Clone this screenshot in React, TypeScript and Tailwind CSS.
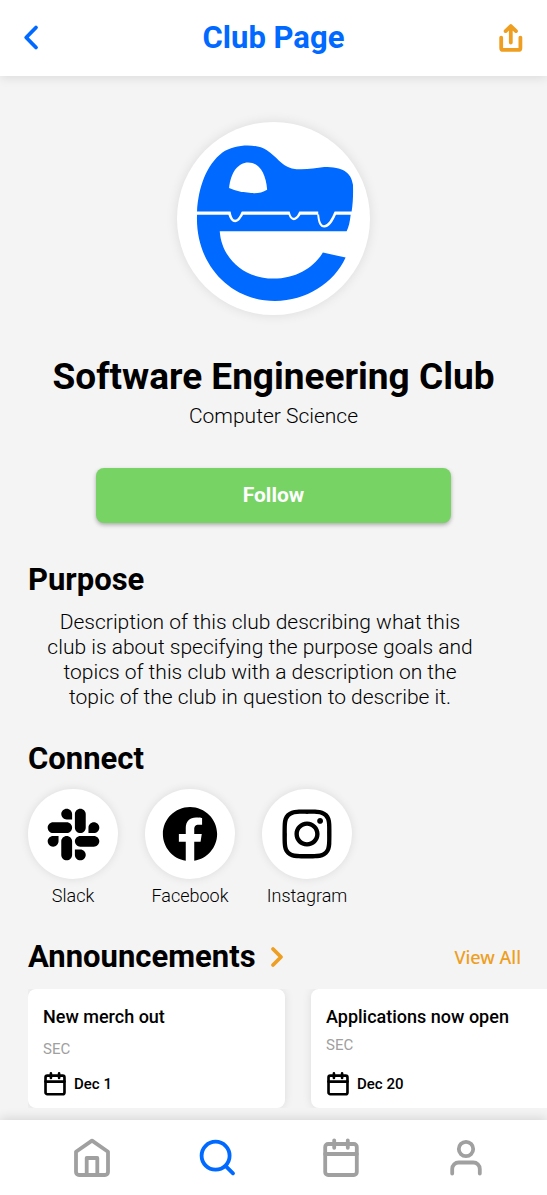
import type { ReactNode } from "react";
import { FaFacebook, FaInstagram, FaSlack } from "react-icons/fa";

function ClubLogo() {
  return (
    <svg viewBox="24 37 578 578" className="size-full" role="img" aria-label="Software Engineering Club logo">
      <path
        fill="#0069ff"
        d="M84 305C88 232 112 165 160 128C198 102 262 101 292 121C325 142 334 167 368 176C400 183 434 175 465 172C520 172 545 187 551 225C552 250 551 280 547 305H451V314H447V305H218H84Z"
      />
      <path
        fill="#0069ff"
        d="M84 315H178C183 330 189 337 198 337C208 337 213 329 222 315H358C362 326 368 331 374 331C381 331 386 326 394 315H444C446 340 452 353 465 353C481 353 490 337 500 315H544C542 337 538 352 532 364H152C157 442 222 506 312 506C381 506 432 474 461 428L529 443C494 520 410 573 318 573C180 573 78 460 84 315Z"
      />
      <path
        fill="#0069ff"
        d="M184 303C187 321 192 330 198 330C205 330 211 321 219 303ZM361 303C364 319 369 324 374 324C379 324 385 318 391 303ZM449 303C450 332 455 346 464 346C476 346 486 329 497 303Z"
      />
      <path fill="#fff" d="M180 235C184 187 208 158 237 158C268 158 290 188 294 240C280 249 265 251 246 250C223 248 200 244 180 235Z" />
    </svg>
  );
}

function ShareIcon() {
  return (
    <svg viewBox="0 0 28 32" className="h-8 w-7" fill="none" stroke="currentColor" strokeWidth="3.8" strokeLinecap="round" strokeLinejoin="round" aria-hidden="true">
      <path d="M4.2 15.6v10.3a2 2 0 0 0 2 2h15.2a2 2 0 0 0 2-2V15.6M13.8 20.6V5M8.6 9.1L13.8 4l5.2 5.1" />
    </svg>
  );
}

function CalendarIcon({ className }: { className: string }) {
  return (
    <svg viewBox="0 0 40 40" className={className} fill="none" stroke="currentColor" strokeLinecap="round" strokeLinejoin="round" aria-hidden="true">
      <rect x="4.2" y="6" width="31.6" height="31" rx="3" />
      <path d="M4.2 16h31.6M13.2 2.3v7.5M26.8 2.3v7.5" />
    </svg>
  );
}

function NavIcon({ children }: { children: ReactNode }) {
  return (
    <svg viewBox="0 0 40 40" className="size-10" fill="none" stroke="currentColor" strokeWidth="3.8" strokeLinecap="round" strokeLinejoin="round" aria-hidden="true">
      {children}
    </svg>
  );
}

const socials = [
  { name: "Slack", icon: <FaSlack size={59} /> },
  { name: "Facebook", icon: <FaFacebook size={56} /> },
  { name: "Instagram", icon: <FaInstagram size={56} /> },
];

const announcements = [
  { title: "New merch out", club: "SEC", date: "Dec 1", clubClass: "mt-[10px]" },
  { title: "Applications now open", club: "SEC", date: "Dec 20", clubClass: "mt-[6px]" },
];

export default function App() {
  return (
    <div className="flex min-h-screen flex-col overflow-x-hidden bg-[#f4f4f4] font-['Roboto',sans-serif] text-black">
      <header className="flex h-19 items-center justify-between bg-white px-[22px] pb-px shadow-[0_2px_10px_rgba(0,0,0,0.1)]">
        <button type="button" aria-label="Back" className="text-[#0069ff]">
          <svg viewBox="0 0 28 28" className="size-7" fill="none" stroke="currentColor" strokeWidth="3.8" strokeLinecap="round" strokeLinejoin="round" aria-hidden="true">
            <path d="M14 3.5L4.2 13.5L14 23.5" />
          </svg>
        </button>
        <h1 className="text-[31px] leading-9 font-bold text-[#0069ff]">Club Page</h1>
        <button type="button" aria-label="Share" className="text-[#ee9e20]">
          <ShareIcon />
        </button>
      </header>

      <main className="flex flex-1 flex-col pt-[46px]">
        <section className="flex flex-col items-center">
          <div className="size-[193px] rounded-full bg-white shadow-[0_0_12px_rgba(0,0,0,0.1)]">
            <ClubLogo />
          </div>
          <h2 className="mt-10 text-[37px] leading-11 font-bold">Software Engineering Club</h2>
          <p className="mt-[5px] text-[21px] leading-6 font-light">Computer Science</p>
          <button type="button" className="mt-10 h-[55px] w-[65%] rounded-lg bg-[#76d364] text-[21px] font-bold text-white shadow-[0_2px_4px_rgba(0,0,0,0.3)]">
            Follow
          </button>
        </section>

        <section className="mt-[41px] px-7">
          <h3 className="text-[31px] leading-8 font-bold">Purpose</h3>
          <p className="mt-[14px] max-w-[464px] px-4 text-center text-[21px] leading-[25px] font-light">
            Description of this club describing what this club is about specifying the purpose goals and topics of this club with a description on the topic of the club in question to describe it.
          </p>
        </section>

        <section className="mt-[33px] px-7">
          <h3 className="text-[31px] leading-8 font-bold">Connect</h3>
          <ul className="mt-[14px] flex gap-[27px]">
            {socials.map((s) => (
              <li key={s.name}>
                <a href="#" className="flex w-[90px] flex-col items-center">
                  <span className="flex size-[90px] items-center justify-center rounded-full bg-white shadow-[0_0_10px_rgba(0,0,0,0.1)]">{s.icon}</span>
                  <span className="mt-[5px] text-[18px] leading-6 font-light">{s.name}</span>
                </a>
              </li>
            ))}
          </ul>
        </section>

        <section className="mt-[33px] pl-7">
          <div className="flex items-center justify-between pr-[26px]">
            <h3 className="flex items-center gap-[11px] text-[31px] leading-8 font-bold">
              Announcements
              <svg viewBox="0 0 20 24" className="h-6 w-5 text-[#ee9e20]" fill="none" stroke="currentColor" strokeWidth="3.8" strokeLinecap="round" strokeLinejoin="round" aria-hidden="true">
                <path d="M6 4L14 12L6 20" />
              </svg>
            </h3>
            <a href="#" className="font-['Noto_Sans',sans-serif] text-[18px] leading-6 font-medium text-[#ee9e20]">View All</a>
          </div>
          <div className="mt-4 flex gap-[26px] overflow-hidden">
            {announcements.map((a) => (
              <article key={a.title} className="flex h-[119px] w-[257px] shrink-0 flex-col rounded-lg bg-white px-[15px] pt-4 pb-3 shadow-[0_0_10px_rgba(0,0,0,0.1)]">
                <h4 className="text-[18px] leading-6 font-medium">{a.title}</h4>
                <p className={`${a.clubClass} text-[15px] leading-5 text-[#a0a0a0]`}>{a.club}</p>
                <p className="mt-auto flex items-center gap-[7px] text-[15px] leading-6 font-medium">
                  <CalendarIcon className="size-6 stroke-[4.4]" />
                  {a.date}
                </p>
              </article>
            ))}
          </div>
        </section>
      </main>

      <nav aria-label="Main" className="grid h-[75px] grid-cols-4 bg-white pr-[19px] pl-[30px] text-[#a0a0a0] shadow-[0_-2px_10px_rgba(0,0,0,0.12)]">
        <a href="#" aria-label="Home" className="flex items-center justify-center">
          <NavIcon>
            <path d="M20 2.6L36 13.7V34a3 3 0 0 1-3 3H7a3 3 0 0 1-3-3V13.7ZM14.7 37V20h10.6V37" />
          </NavIcon>
        </a>
        <a href="#" aria-label="Search" className="flex items-center justify-center text-[#0069ff]">
          <NavIcon>
            <circle cx="18.6" cy="17.7" r="14" />
            <path d="M29 28.3L36 35.3" />
          </NavIcon>
        </a>
        <a href="#" aria-label="Calendar" className="flex items-center justify-center">
          <CalendarIcon className="size-10 stroke-[3.8]" />
        </a>
        <a href="#" aria-label="Profile" className="flex items-center justify-center">
          <NavIcon>
            <circle cx="20" cy="11" r="7.2" />
            <path d="M6.2 35.5V31a6.5 6.5 0 0 1 6.5-6.5h14.6a6.5 6.5 0 0 1 6.5 6.5v4.5" />
          </NavIcon>
        </a>
      </nav>
    </div>
  );
}
